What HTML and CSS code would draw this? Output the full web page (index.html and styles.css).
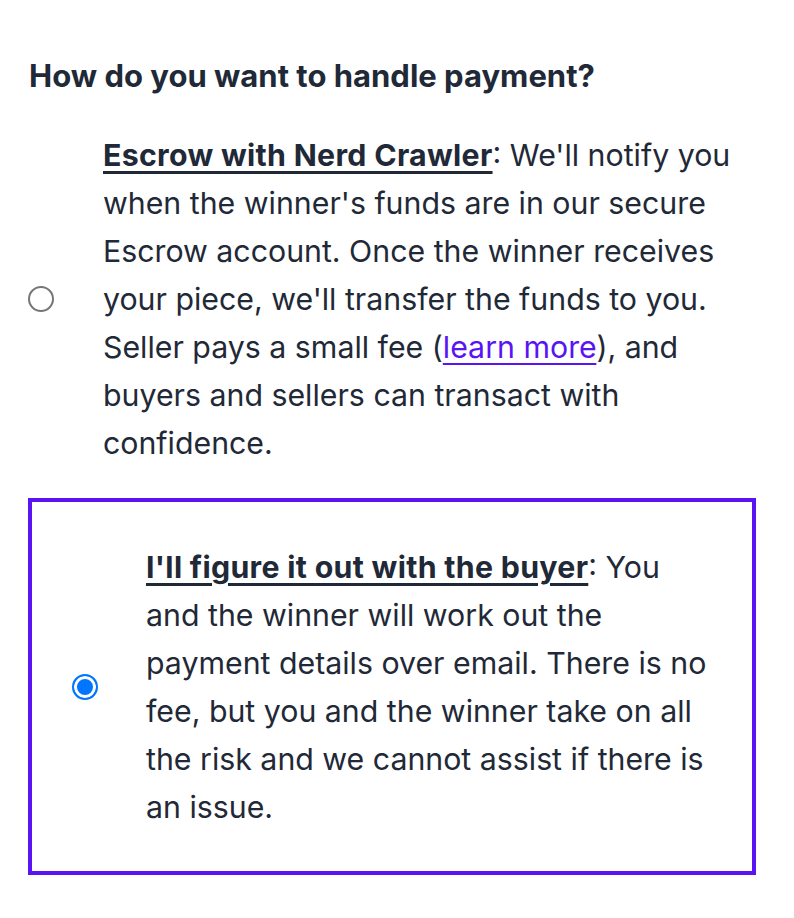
FILE: index.html
```html
<!DOCTYPE html>
<html lang="en">
<head>
<meta charset="utf-8">
<title>Payment</title>
<link rel="stylesheet" href="styles.css">
</head>
<body>
<div class="page">
  <h2 class="title">How do you want to handle payment?</h2>
  <div class="options">
    <label class="option">
      <span class="radio"></span>
      <span class="desc"><u class="name">Escrow with Nerd Crawler</u>: We'll notify you when the winner's funds are in our secure Escrow account. Once the winner receives your piece, we'll transfer the funds to you. Seller pays a small fee (<a class="link" href="#">learn more</a>), and buyers and sellers can transact with confidence.</span>
    </label>
    <label class="option selected">
      <span class="radio checked"></span>
      <span class="desc"><u class="name">I'll figure it out with the buyer</u>: You and the winner will work out the payment details over email. There is no fee, but you and the winner take on all the risk and we cannot assist if there is an issue.</span>
    </label>
  </div>
</div>
</body>
</html>
```
FILE: styles.css
```css
html, body {
  margin: 0;
  padding: 0;
  background: #ffffff;
}
body {
  font-family: Inter, "Noto Sans", sans-serif;
  color: #1f2937;
}
.page {
  padding: 56px 38px 0 28px;
}
.title {
  margin: 0 0 35px 1px;
  font-size: 31px;
  line-height: 40px;
  font-weight: 700;
}
.options {
  display: flex;
  flex-direction: column;
  gap: 31px;
}
.option {
  display: flex;
  align-items: center;
  gap: 49px;
  font-size: 30.3px;
  line-height: 48px;
}
.option.selected {
  border: 4px solid #5a14f4;
  padding: 41px 40px 40px 40px;
  gap: 48px;
}
.radio {
  flex: 0 0 auto;
  width: 26px;
  height: 26px;
  box-sizing: border-box;
  border-radius: 50%;
  border: 2px solid #767676;
  background: #fff;
}
.radio.checked {
  border-color: #0075ff;
  background: #0075ff;
  box-shadow: inset 0 0 0 3px #fff;
}
.desc {
  flex: 1 1 auto;
}
.name {
  font-weight: 700;
  letter-spacing: 0.3px;
  text-decoration-thickness: 3px;
  text-underline-offset: 5px;
}
.link {
  color: #5a14f4;
  text-decoration-thickness: 2px;
  text-underline-offset: 5px;
}
```
